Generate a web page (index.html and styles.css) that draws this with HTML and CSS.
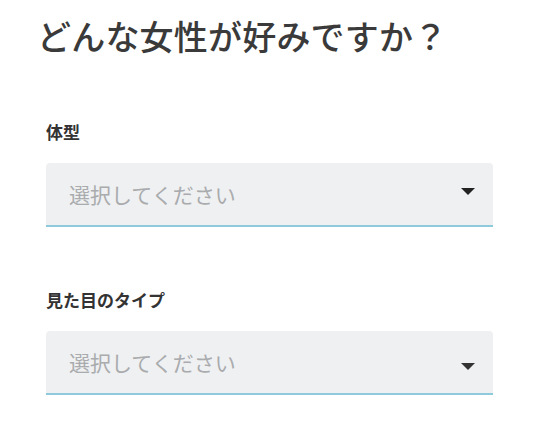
FILE: index.html
```html
<!DOCTYPE html>
<html lang="ja">
<head>
<meta charset="utf-8">
<link rel="stylesheet" href="styles.css">
</head>
<body>
<main class="page">
  <h1 class="title">どんな女性が好みですか？</h1>
  <div class="field field-first">
    <div class="label">体型</div>
    <div class="select">
      <span class="placeholder">選択してください</span>
      <svg class="arrow" width="14" height="7" viewBox="0 0 14 7"><path d="M0 0H14L7 7Z" fill="#222"/></svg>
    </div>
  </div>
  <div class="field">
    <div class="label">見た目のタイプ</div>
    <div class="select">
      <span class="placeholder">選択してください</span>
      <svg class="arrow arrow-low" width="14" height="7" viewBox="0 0 14 7"><path d="M0 0H14L7 7Z" fill="#333"/></svg>
    </div>
  </div>
</main>
</body>
</html>
```

FILE: styles.css
```css
html, body {
  margin: 0;
  padding: 0;
  background: #ffffff;
}
body {
  font-family: "Noto Sans CJK JP", "Noto Sans", sans-serif;
  color: #3b3b3b;
}
.page {
  padding: 16px 47px 0 46px;
}
.title {
  margin: 0 0 0 -9px;
  font-size: 34px;
  line-height: 40px;
  font-weight: 500;
  color: #3a3a3a;
  letter-spacing: 0.2px;
}
.field {
  margin-top: 61px;
}
.field-first {
  margin-top: 64px;
}
.label {
  font-size: 17px;
  line-height: 24px;
  font-weight: 700;
  color: #333;
}
.select {
  margin-top: 19px;
  height: 62px;
  background: #eff0f2;
  border-bottom: 2px solid #8fc9dc;
  border-radius: 4px 4px 0 0;
  display: flex;
  align-items: center;
  justify-content: space-between;
  padding: 0 18px 0 23px;
}
.placeholder {
  font-size: 21px;
  color: #a9abad;
  line-height: 30px;
}
.arrow {
  display: block;
  margin-top: -6px;
}
.arrow-low {
  margin-top: 8px;
}
```
